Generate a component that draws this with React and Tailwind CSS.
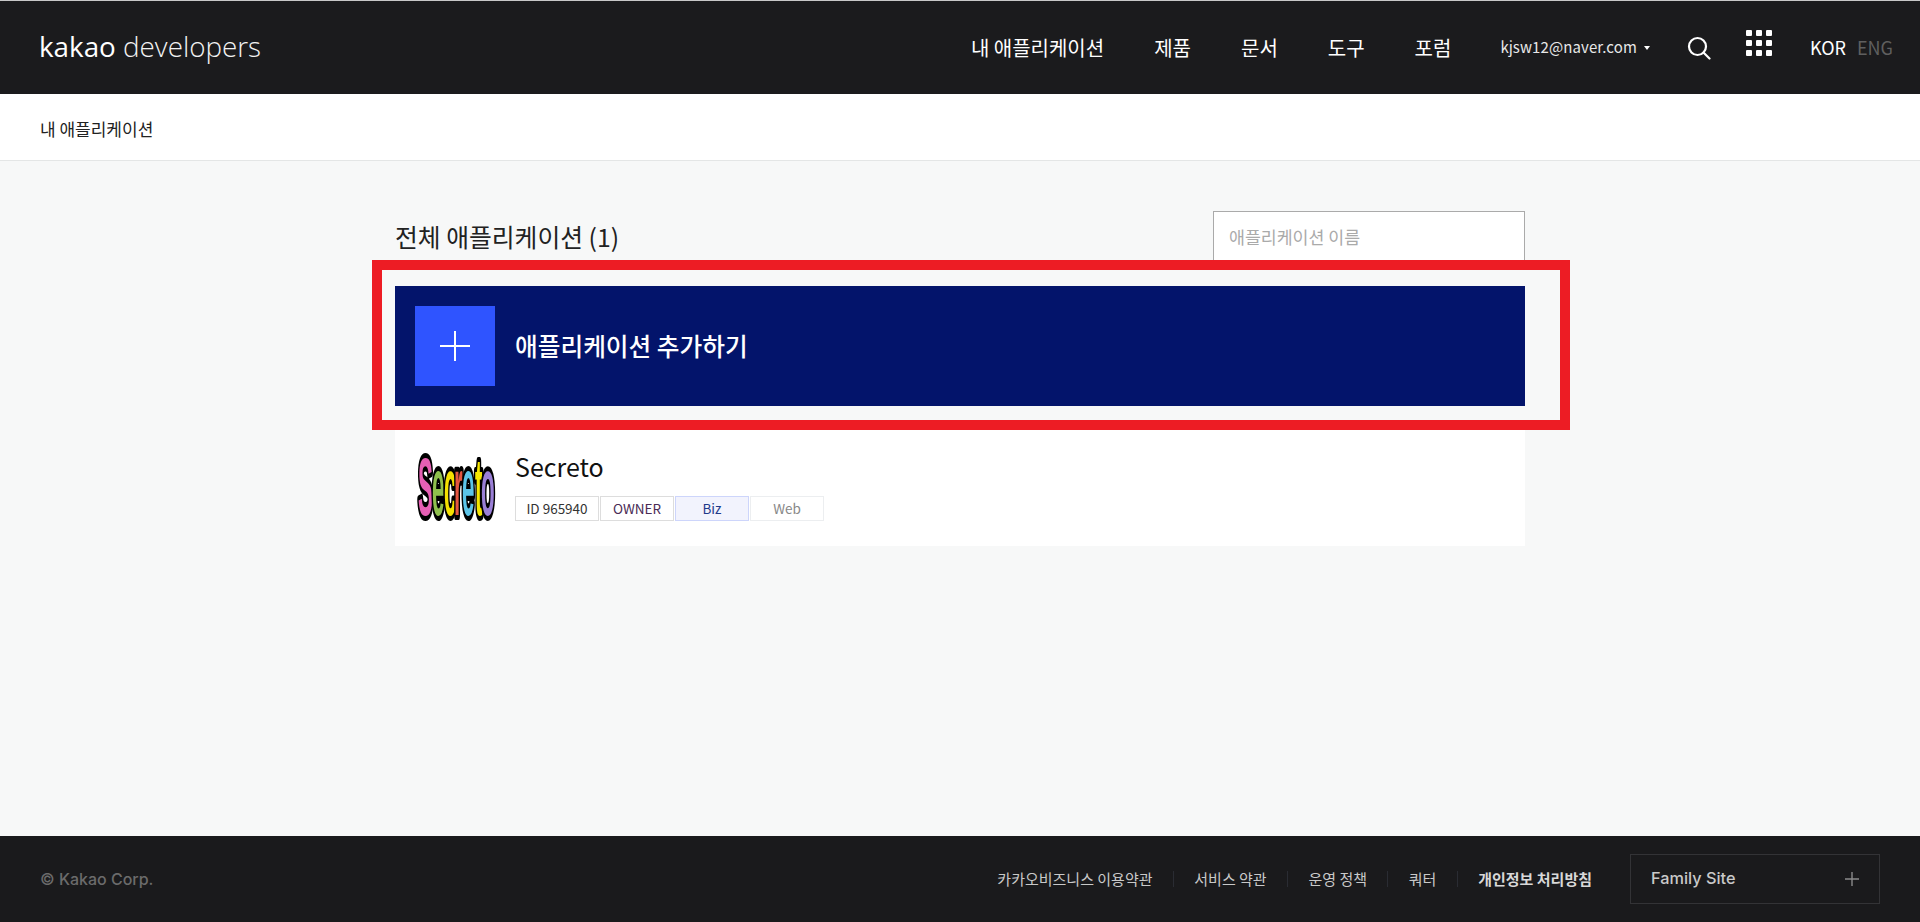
import React from "react";

const kr = { fontFamily: '"Noto Sans CJK KR", "Noto Sans", sans-serif' };

function SecretoLogo() {
  const letters = [
    ["S", "#e65fb4", 0],
    ["e", "#8fbf4d", 14],
    ["c", "#f5e000", 26],
    ["r", "#e5573f", 36],
    ["e", "#5bc4e8", 44],
    ["t", "#f5e600", 57],
    ["o", "#9a7fd6", 63],
  ];
  return (
    <svg width="80" height="80" viewBox="0 0 80 80" className="shrink-0 overflow-visible">
      <defs>
        <filter id="soft">
          <feGaussianBlur stdDeviation="0.6" />
        </filter>
      </defs>
      <g filter="url(#soft)" fontFamily='"Liberation Sans", sans-serif' fontWeight="700" fontSize="36">
        {letters.map(([c, fill, x], i) => (
          <text
            key={i}
            transform={`translate(${x + 3} 69) scale(0.62 2.25)`}
            fill={fill}
            stroke="#000"
            strokeWidth="4.5"
            paintOrder="stroke"
            strokeLinejoin="round"
          >
            {c}
          </text>
        ))}
      </g>
    </svg>
  );
}

function Tag({ className, children }) {
  return (
    <span className={`h-[25px] mr-px flex items-center justify-center border text-[13.5px] ${className}`}>
      {children}
    </span>
  );
}

export default function App() {
  return (
    <div className="min-h-screen flex flex-col bg-[#f7f8f8]" style={kr}>
      <header className="h-[94px] shrink-0 border-t border-[#c8c8c8] bg-[#1b1b1d] flex items-center pl-[39px] text-white">
        <div className="text-[27.8px] leading-none font-light mb-[2px] text-[#f2f2f2]" style={{ fontFamily: '"Open Sans", sans-serif' }}>
          <span className="font-normal text-white">kakao</span> developers
        </div>
        <nav className="ml-auto flex items-center text-[20px] gap-[50px]">
          <a>내 애플리케이션</a>
          <a>제품</a>
          <a>문서</a>
          <a>도구</a>
          <a>포럼</a>
        </nav>
        <div className="ml-[49px] flex items-center text-[15px] tracking-[0.1px] text-[#e8e8e8]">
          kjsw12@naver.com
          <span className="ml-[7px] w-0 h-0 border-x-[3px] border-x-transparent border-t-[4px] border-t-white" />
        </div>
        <svg width="24" height="24" viewBox="0 0 24 24" fill="none" stroke="white" strokeWidth="2.2" className="ml-[37px]">
          <circle cx="10.5" cy="10.5" r="8.5" />
          <path d="M16.5 16.5 L22.5 22.5" strokeLinecap="round" />
        </svg>
        <div className="ml-[35px] mb-[10px] grid grid-cols-3 gap-[4px]">
          {[0, 1, 2, 3, 4, 5, 6, 7, 8].map((i) => (
            <span key={i} className="w-[6px] h-[6px] rounded-[1px] bg-white" />
          ))}
        </div>
        <div className="ml-[38px] mr-[27px] flex gap-[11px] text-[18px]">
          <span>KOR</span>
          <span className="text-[#5f5f5f]">ENG</span>
        </div>
      </header>

      <div className="h-[67px] shrink-0 bg-white border-b border-[#e4e6e6] flex items-center pl-[40px] pt-[4px] text-[17px] text-[#222]">
        내 애플리케이션
      </div>

      <main className="flex-1">
        <div className="relative w-[1130px] ml-[395px] mt-[50px]">
          <div className="flex items-start justify-between h-[75px]">
            <h2 className="text-[24.8px] leading-[50px] text-[#222] font-normal">전체 애플리케이션 (1)</h2>
            <input
              placeholder="애플리케이션 이름"
              className="w-[312px] h-[50px] border border-[#aaa] bg-white px-[15px] text-[17.3px] outline-none placeholder:text-[#aaa]"
            />
          </div>

          <div className="h-[120px] bg-[#03146b] flex items-center pl-[20px] text-white">
            <div className="w-[80px] h-[80px] bg-[#2f54ff] flex items-center justify-center">
              <svg width="30" height="30" viewBox="0 0 30 30" stroke="white" strokeWidth="2">
                <path d="M15 0V30M0 15H30" />
              </svg>
            </div>
            <div className="ml-[20px] text-[24.7px] font-medium">애플리케이션 추가하기</div>
          </div>

          <div className="h-[120px] mt-[20px] bg-white flex items-center pl-[20px]">
            <SecretoLogo />
            <div className="ml-[20px]">
              <div className="text-[25px] leading-[36px] text-[#111]">Secreto</div>
              <div className="flex mt-[12px] mb-[3px]">
                <Tag className="w-[84px] border-[#ddd] text-[#333]">ID 965940</Tag>
                <Tag className="w-[74px] border-[#ddd] text-[#4a2b55]">OWNER</Tag>
                <Tag className="w-[74px] border-[#cdd5fb] bg-[#f2f3fd] text-[#1f3a8a]">Biz</Tag>
                <Tag className="w-[74px] border-[#eceef0] text-[#888]">Web</Tag>
              </div>
            </div>
          </div>

          {/* red annotation box from the screenshot */}
          <div className="absolute left-[-23px] top-[49px] w-[1198px] h-[170px] border-[10px] border-[#ed1c24] pointer-events-none" />
        </div>
      </main>

      <footer className="h-[86px] shrink-0 bg-[#1a1a1c] flex items-center pl-[40px] text-[15px]">
        <span className="text-[#6b6b6b] text-[16px] font-medium" style={{ fontFamily: "Inter, sans-serif" }}>© Kakao Corp.</span>
        <div className="ml-auto flex items-center text-[#c9c9c9]">
          <a>카카오비즈니스 이용약관</a>
          <span className="w-px h-[16px] bg-[#2a2c33] mx-[20.4px]" />
          <a>서비스 약관</a>
          <span className="w-px h-[16px] bg-[#2a2c33] mx-[20.4px]" />
          <a>운영 정책</a>
          <span className="w-px h-[16px] bg-[#2a2c33] mx-[20.4px]" />
          <a>쿼터</a>
          <span className="w-px h-[16px] bg-[#2a2c33] mx-[20.4px]" />
          <a className="font-bold text-[#d8d8d8]">개인정보 처리방침</a>
        </div>
        <div className="ml-[38px] mr-[40px] w-[250px] h-[50px] border border-[#333336] flex items-center justify-between pl-[20px] pr-[20px] text-[#c9c9c9]">
          <span className="text-[16.3px] font-medium mb-[2px]" style={{ fontFamily: "Inter, sans-serif" }}>Family Site</span>
          <svg width="14" height="14" viewBox="0 0 14 14" stroke="#8a8a8a" strokeWidth="1.4">
            <path d="M7 0V14M0 7H14" />
          </svg>
        </div>
      </footer>
    </div>
  );
}
